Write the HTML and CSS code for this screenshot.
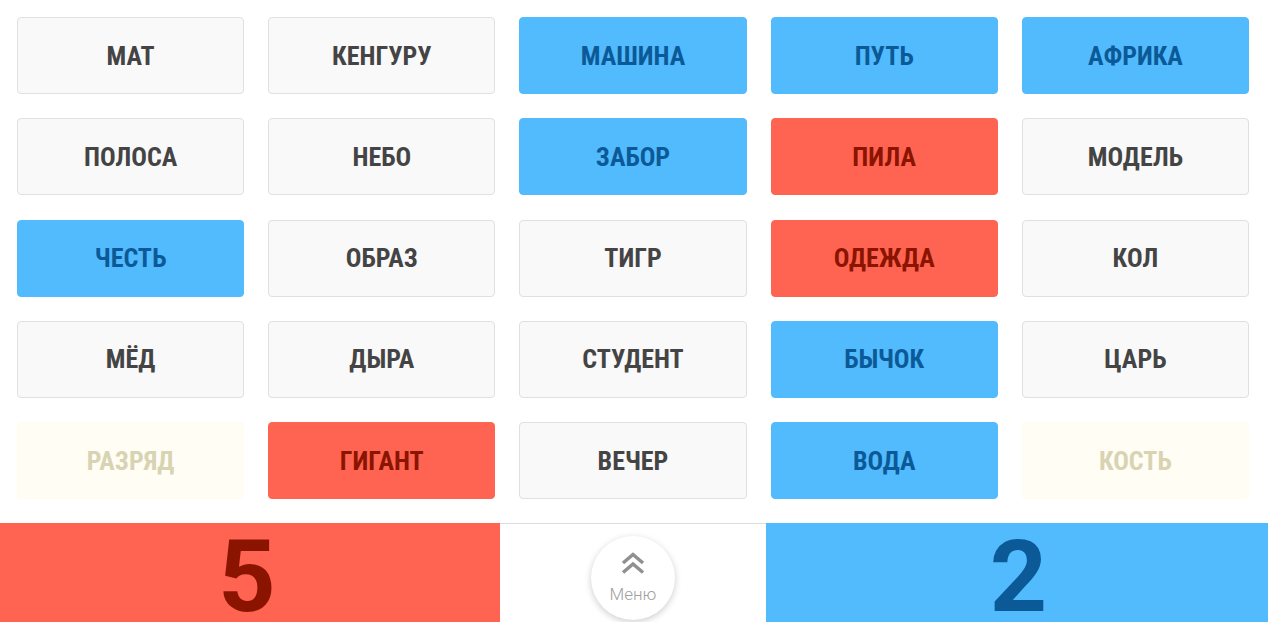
FILE: index.html
```html
<!DOCTYPE html>
<html lang="ru">
<head>
    <meta charset="UTF-8">
    <meta name="viewport" content="width=device-width, initial-scale=1.0">
    <title>Кодовые имена</title>
    <link rel="stylesheet" href="styles.css">
</head>
<body>
<!-- Поле слов -->
<div class="board">
    <div class="card">мат</div>
    <div class="card">кенгуру</div>
    <div class="card blue">машина</div>
    <div class="card blue">путь</div>
    <div class="card blue">африка</div>

    <div class="card">полоса</div>
    <div class="card">небо</div>
    <div class="card blue">забор</div>
    <div class="card red">пила</div>
    <div class="card">модель</div>

    <div class="card blue">честь</div>
    <div class="card">образ</div>
    <div class="card">тигр</div>
    <div class="card red">одежда</div>
    <div class="card">кол</div>

    <div class="card">мёд</div>
    <div class="card">дыра</div>
    <div class="card">студент</div>
    <div class="card blue">бычок</div>
    <div class="card">царь</div>

    <div class="card faded">разряд</div>
    <div class="card red">гигант</div>
    <div class="card">вечер</div>
    <div class="card blue">вода</div>
    <div class="card faded">кость</div>
</div>

<!-- Счёт и меню -->
<div class="score-bar">
    <div class="score red-team">5</div>
    <div class="menu-area">
        <div class="menu-btn">
            <svg class="menu-icon" width="24" height="22" viewBox="0 0 24 22">
                <polyline points="2,11 12,2.5 22,11" />
                <polyline points="2,20.5 12,12 22,20.5" />
            </svg>
            <span class="menu-label">Меню</span>
        </div>
    </div>
    <div class="score blue-team">2</div>
</div>
</body>
</html>
```

FILE: styles.css
```css
* {
    box-sizing: border-box;
    margin: 0;
    padding: 0;
}
body {
    font-family: 'Roboto', 'Liberation Sans', sans-serif;
    background-color: #ffffff;
    width: 1268px;
    height: 622px;
    overflow: hidden;
}

/* Board */
.board {
    height: 523px;
    padding: 17px 19px 24px 17px;
    display: grid;
    grid-template-columns: repeat(5, 1fr);
    grid-template-rows: repeat(5, 1fr);
    column-gap: 24px;
    row-gap: 24.25px;
}
.card {
    display: flex;
    justify-content: center;
    align-items: center;
    background-color: #f9f9f9;
    border: 1px solid #e0e0e0;
    border-radius: 4px;
    font-family: 'Roboto Condensed', 'Liberation Sans Narrow', 'DejaVu Sans Condensed', 'Roboto', sans-serif;
    font-stretch: condensed;
    font-weight: bold;
    font-size: 26px;
    text-transform: uppercase;
    color: #444444;
}
.card.blue {
    background-color: #52bbfe;
    border-color: #52bbfe;
    color: #0b5a97;
}
.card.red {
    background-color: #ff6452;
    border-color: #ff6452;
    color: #8a1400;
}
.card.faded {
    background-color: #fffdf4;
    border-color: #fffcf0;
    color: #d8d3b2;
}

/* Score bar */
.score-bar {
    display: flex;
    height: 99px;
}
.score {
    font-family: 'Roboto', sans-serif;
    font-weight: bold;
    font-size: 100px;
    line-height: 80px;
    padding-top: 14px;
    text-align: center;
}
.red-team {
    flex: 0 0 500px;
    background-color: #ff6452;
    color: #8a1400;
    padding-right: 6px;
}
.blue-team {
    flex: 0 0 502px;
    background-color: #52bbfe;
    color: #0b5a97;
    padding-left: 3px;
}
.menu-area {
    flex: 1;
    border-top: 1px solid #dddddd;
    display: flex;
    justify-content: center;
}
.menu-btn {
    width: 84px;
    height: 84px;
    margin-top: 12px;
    border-radius: 50%;
    background-color: #ffffff;
    box-shadow: 0 2px 7px rgba(0, 0, 0, 0.2);
    display: flex;
    flex-direction: column;
    align-items: center;
    padding-top: 16px;
    cursor: pointer;
}
.menu-icon {
    fill: none;
    stroke: #909090;
    stroke-width: 3.5;
}
.menu-label {
    margin-top: 10px;
    font-size: 17px;
    line-height: 20px;
    font-weight: 300;
    color: #a0a0a0;
}
```
